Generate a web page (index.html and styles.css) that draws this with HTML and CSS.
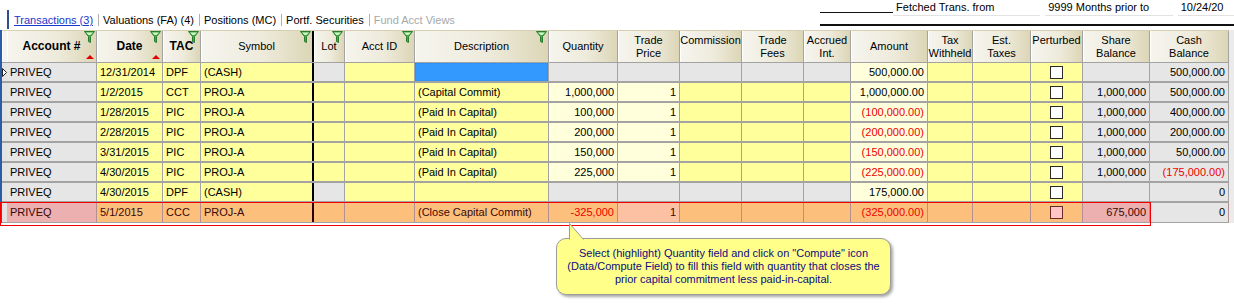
FILE: index.html
```html
<!DOCTYPE html>
<html lang="en">
<head>
  <meta charset="UTF-8">
  <title>Transactions</title>
  <link rel="stylesheet" href="styles.css">
</head>
<body>
  <div class="top">
    <div class="tabs">
      <a class="tab active">Transactions (3)</a>
      <span class="sep"></span>
      <span class="tab">Valuations (FA) (4)</span>
      <span class="sep"></span>
      <span class="tab">Positions (MC)</span>
      <span class="sep"></span>
      <span class="tab">Portf. Securities</span>
      <span class="sep"></span>
      <span class="tab off">Fund Acct Views</span>
    </div>
    <div class="fetch">
      <span class="lead"></span>
      <span class="fld f1">Fetched Trans. from</span>
      <span class="fld f2">9999 Months prior to</span>
      <span class="fld f3">10/24/20</span>
    </div>
  </div>

  <div class="grid">
    <div class="row head">
      <div class="h"></div>
      <div class="h b">Account #<svg class="flt" width="11" height="12" viewBox="0 0 11 12"><path d="M0.5 0.5H10.5L6.5 5.5V11.5L4.5 10.5V5.5Z" fill="#3fae45" stroke="#2a7d2e"/><path d="M2 1.5H9L6.5 4H4.5Z" fill="#d2f5c8"/></svg><span class="sort"></span></div>
      <div class="h b">Date<svg class="flt" width="11" height="12" viewBox="0 0 11 12"><path d="M0.5 0.5H10.5L6.5 5.5V11.5L4.5 10.5V5.5Z" fill="#3fae45" stroke="#2a7d2e"/><path d="M2 1.5H9L6.5 4H4.5Z" fill="#d2f5c8"/></svg><span class="sort"></span></div>
      <div class="h b">TAC<svg class="flt" width="11" height="12" viewBox="0 0 11 12"><path d="M0.5 0.5H10.5L6.5 5.5V11.5L4.5 10.5V5.5Z" fill="#3fae45" stroke="#2a7d2e"/><path d="M2 1.5H9L6.5 4H4.5Z" fill="#d2f5c8"/></svg></div>
      <div class="h split">Symbol<svg class="flt" width="11" height="12" viewBox="0 0 11 12"><path d="M0.5 0.5H10.5L6.5 5.5V11.5L4.5 10.5V5.5Z" fill="#3fae45" stroke="#2a7d2e"/><path d="M2 1.5H9L6.5 4H4.5Z" fill="#d2f5c8"/></svg></div>
      <div class="h">Lot<svg class="flt" width="11" height="12" viewBox="0 0 11 12"><path d="M0.5 0.5H10.5L6.5 5.5V11.5L4.5 10.5V5.5Z" fill="#3fae45" stroke="#2a7d2e"/><path d="M2 1.5H9L6.5 4H4.5Z" fill="#d2f5c8"/></svg></div>
      <div class="h">Acct ID<svg class="flt" width="11" height="12" viewBox="0 0 11 12"><path d="M0.5 0.5H10.5L6.5 5.5V11.5L4.5 10.5V5.5Z" fill="#3fae45" stroke="#2a7d2e"/><path d="M2 1.5H9L6.5 4H4.5Z" fill="#d2f5c8"/></svg></div>
      <div class="h">Description<svg class="flt" width="11" height="12" viewBox="0 0 11 12"><path d="M0.5 0.5H10.5L6.5 5.5V11.5L4.5 10.5V5.5Z" fill="#3fae45" stroke="#2a7d2e"/><path d="M2 1.5H9L6.5 4H4.5Z" fill="#d2f5c8"/></svg></div>
      <div class="h">Quantity</div>
      <div class="h">Trade<br>Price</div>
      <div class="h">Commission<br>&nbsp;</div>
      <div class="h">Trade<br>Fees</div>
      <div class="h">Accrued<br>Int.</div>
      <div class="h">Amount</div>
      <div class="h">Tax<br>Withheld</div>
      <div class="h">Est.<br>Taxes</div>
      <div class="h">Perturbed<br>&nbsp;</div>
      <div class="h">Share<br>Balance</div>
      <div class="h">Cash<br>Balance</div>
    </div>

    <div class="row">
      <div class="sel"><svg class="ind" width="5" height="9" viewBox="0 0 5 9"><path d="M0.5 0.5L4.5 4.5L0.5 8.5Z" fill="#fff" stroke="#222"/></svg></div>
      <div class="c g">PRIVEQ</div><div class="c y">12/31/2014</div><div class="c y">DPF</div><div class="c y split">(CASH)</div>
      <div class="c g"></div><div class="c y"></div><div class="c y"><span class="pick"></span></div>
      <div class="c g"></div><div class="c g"></div><div class="c g"></div><div class="c g"></div><div class="c g"></div>
      <div class="c ly r">500,000.00</div><div class="c y"></div><div class="c y"></div>
      <div class="c y ctr"><span class="chk"></span></div><div class="c g"></div><div class="c g r">500,000.00</div>
    </div>

    <div class="row">
      <div class="sel"></div>
      <div class="c g">PRIVEQ</div><div class="c y">1/2/2015</div><div class="c y">CCT</div><div class="c y split">PROJ-A</div>
      <div class="c y"></div><div class="c y"></div><div class="c y">(Capital Commit)</div>
      <div class="c ly r">1,000,000</div><div class="c ly r">1</div><div class="c y"></div><div class="c y"></div><div class="c y"></div>
      <div class="c ly r">1,000,000.00</div><div class="c y"></div><div class="c y"></div>
      <div class="c y ctr"><span class="chk"></span></div><div class="c g r">1,000,000</div><div class="c g r">500,000.00</div>
    </div>

    <div class="row">
      <div class="sel"></div>
      <div class="c g">PRIVEQ</div><div class="c y">1/28/2015</div><div class="c y">PIC</div><div class="c y split">PROJ-A</div>
      <div class="c y"></div><div class="c y"></div><div class="c y">(Paid In Capital)</div>
      <div class="c ly r">100,000</div><div class="c ly r">1</div><div class="c y"></div><div class="c y"></div><div class="c y"></div>
      <div class="c ly r neg">(100,000.00)</div><div class="c y"></div><div class="c y"></div>
      <div class="c y ctr"><span class="chk"></span></div><div class="c g r">1,000,000</div><div class="c g r">400,000.00</div>
    </div>

    <div class="row">
      <div class="sel"></div>
      <div class="c g">PRIVEQ</div><div class="c y">2/28/2015</div><div class="c y">PIC</div><div class="c y split">PROJ-A</div>
      <div class="c y"></div><div class="c y"></div><div class="c y">(Paid In Capital)</div>
      <div class="c ly r">200,000</div><div class="c ly r">1</div><div class="c y"></div><div class="c y"></div><div class="c y"></div>
      <div class="c ly r neg">(200,000.00)</div><div class="c y"></div><div class="c y"></div>
      <div class="c y ctr"><span class="chk"></span></div><div class="c g r">1,000,000</div><div class="c g r">200,000.00</div>
    </div>

    <div class="row">
      <div class="sel"></div>
      <div class="c g">PRIVEQ</div><div class="c y">3/31/2015</div><div class="c y">PIC</div><div class="c y split">PROJ-A</div>
      <div class="c y"></div><div class="c y"></div><div class="c y">(Paid In Capital)</div>
      <div class="c ly r">150,000</div><div class="c ly r">1</div><div class="c y"></div><div class="c y"></div><div class="c y"></div>
      <div class="c ly r neg">(150,000.00)</div><div class="c y"></div><div class="c y"></div>
      <div class="c y ctr"><span class="chk"></span></div><div class="c g r">1,000,000</div><div class="c g r">50,000.00</div>
    </div>

    <div class="row">
      <div class="sel"></div>
      <div class="c g">PRIVEQ</div><div class="c y">4/30/2015</div><div class="c y">PIC</div><div class="c y split">PROJ-A</div>
      <div class="c y"></div><div class="c y"></div><div class="c y">(Paid In Capital)</div>
      <div class="c ly r">225,000</div><div class="c ly r">1</div><div class="c y"></div><div class="c y"></div><div class="c y"></div>
      <div class="c ly r neg">(225,000.00)</div><div class="c y"></div><div class="c y"></div>
      <div class="c y ctr"><span class="chk"></span></div><div class="c g r">1,000,000</div><div class="c g r neg">(175,000.00)</div>
    </div>

    <div class="row">
      <div class="sel"></div>
      <div class="c g">PRIVEQ</div><div class="c y">4/30/2015</div><div class="c y">DPF</div><div class="c y split">(CASH)</div>
      <div class="c g"></div><div class="c y"></div><div class="c y"></div>
      <div class="c g"></div><div class="c g"></div><div class="c g"></div><div class="c g"></div><div class="c g"></div>
      <div class="c ly r">175,000.00</div><div class="c y"></div><div class="c y"></div>
      <div class="c y ctr"><span class="chk"></span></div><div class="c g"></div><div class="c g r">0</div>
    </div>

    <div class="row new">
      <div class="sel"></div>
      <div class="c pk">PRIVEQ</div><div class="c o">5/1/2015</div><div class="c o">CCC</div><div class="c o split">PROJ-A</div>
      <div class="c o"></div><div class="c o"></div><div class="c o">(Close Capital Commit)</div>
      <div class="c o r neg">-325,000</div><div class="c sa r">1</div><div class="c o"></div><div class="c o"></div><div class="c o"></div>
      <div class="c o r neg">(325,000.00)</div><div class="c o"></div><div class="c o"></div>
      <div class="c o ctr"><span class="chk pchk"></span></div><div class="c pk r">675,000</div><div class="c g r">0</div>
      <div class="mark"></div>
    </div>
  </div>

  <div class="tip">
    <svg class="tail" width="16" height="17" viewBox="0 0 16 17"><path d="M0.5 16.5V0.5L14.5 16.5" fill="#ffff8a" stroke="#9c9c9c"/></svg>
    Select (highlight) Quantity field and click on "Compute" icon<br>
    (Data/Compute Field) to fill this field with quantity that closes the<br>
    prior capital commitment less paid-in-capital.
  </div>
</body>
</html>
```

FILE: styles.css
```css
body {
  margin: 0;
  width: 1234px;
  height: 304px;
  position: relative;
  overflow: hidden;
  background: #fff;
  font-family: "Liberation Sans", Arial, sans-serif;
  font-size: 11px;
  color: #000;
}

/* tab strip + fetch range */
.top {
  height: 30px;
  display: flex;
  background: #fff;
}
.tabs {
  display: flex;
  align-items: center;
  align-self: flex-end;
  height: 19px;
  margin-left: 7px;
  padding-left: 4px;
  border-left: 2px solid #2f4f8f;
  margin-bottom: 1px;
}
.tab {
  padding: 0 3px 0 1px;
  white-space: nowrap;
}
.tab.active {
  color: #1a36c8;
  text-decoration: underline;
}
.tab.off {
  color: #a8a8a8;
}
.sep {
  width: 1px;
  height: 12px;
  background: #b0b0b0;
  margin: 0 3px 0 2px;
}
.fetch {
  margin-left: auto;
  width: 414px;
  height: 24px;
  display: flex;
  align-items: flex-start;
  border-bottom: 2px solid #111;
}
.lead {
  width: 74px;
  height: 12px;
  border-bottom: 1px solid #111;
}
.fld {
  height: 15px;
  line-height: 15px;
  padding-left: 3px;
  border-bottom: 1px solid #e2e2e2;
  margin-right: 5px;
  white-space: nowrap;
}
.f1 { width: 146px; }
.f2 { width: 126px; }
.f3 { width: 54px; margin-right: 0; }

/* grid */
.grid {
  border-left: 2px solid #2b5ca6;
  background: #ebebeb;
  height: 193px;
}
.row {
  display: grid;
  grid-template-columns: 5px 90px 66px 38px 113px 31px 70px 134px 69px 62px 62px 62px 47px 77px 45px 58px 52px 67px 79px;
  height: 20px;
  border-bottom: 2px solid #a3a3a3;
  box-sizing: border-box;
  width: 1227px;
  position: relative;
}
.row.head {
  height: 33px;
  border-bottom: 1px solid #a3a3a3;
  border-top: 1px solid #d6d0b0;
}
.h {
  position: relative;
  display: flex;
  align-items: center;
  justify-content: center;
  text-align: center;
  line-height: 13px;
  border-right: 1px solid #a3a3a3;
  background: linear-gradient(to right, #f6f5ee 0%, #eeebdc 55%, #dcd6b6 100%);
  box-shadow: inset 1px 0 0 #fff;
}
.h:first-child {
  background: #f4f4f4;
  border-right: none;
}
.h.b {
  font-weight: bold;
  font-size: 12px;
}
.flt {
  position: absolute;
  top: 0;
  right: 1px;
}
.sort {
  position: absolute;
  right: 2px;
  bottom: 3px;
  border-left: 4px solid transparent;
  border-right: 4px solid transparent;
  border-bottom: 4px solid #e00000;
}
.split {
  border-right: 2px solid #000 !important;
}

.sel {
  background: #e4e4e4;
  position: relative;
}
.ind {
  position: absolute;
  left: 0;
  top: 5px;
}
.c {
  border-right: 1px solid #a3a3a3;
  padding: 0 3px;
  line-height: 18px;
  white-space: nowrap;
  overflow: hidden;
  position: relative;
}
.r { text-align: right; padding-right: 3px; }
.ctr { display: flex; justify-content: center; align-items: center; }
.neg { color: #f00000; }
.g { background: #e6e6e6; }
.y { background: #ffff9c; }
.ly { background: #ffffdc; }
.o { background: #fdbf7c; color: #3a0808; }
.pk { background: #ecb0b0; color: #3a0808; }
.sa { background: #fcc0a2; color: #3a0808; }
.o.neg { color: #f00000; }
.new .c { border-right-color: #b49090; }
.new .split { border-right-color: #2a0000 !important; }

.chk {
  width: 11px;
  height: 11px;
  background: #fff;
  border: 1px solid #2a2a2a;
}
.pchk {
  background: #ffc6c6;
  border-color: #6a2a2a;
}
.pick {
  position: absolute;
  inset: 0;
  background: #3399ff;
  border: 1px dotted #b06a30;
}
.mark {
  position: absolute;
  left: -2px;
  top: -1px;
  width: 1151px;
  height: 24px;
  border: 1px solid #f00000;
  box-sizing: border-box;
  pointer-events: none;
}
.grid .row:last-child {
  border-bottom: 1px solid #a3a3a3;
  height: 20px;
}

/* callout */
.tip {
  position: absolute;
  left: 556px;
  top: 238px;
  width: 335px;
  height: 57px;
  box-sizing: border-box;
  padding-top: 8px;
  background: #ffff8a;
  border: 1px solid #9c9c9c;
  border-radius: 10px;
  box-shadow: 2px 2px 3px rgba(0, 0, 0, 0.35);
  color: #0c0c80;
  text-align: center;
  font-size: 11px;
  line-height: 13px;
}
.tail {
  position: absolute;
  left: 12px;
  top: -16px;
}
```
